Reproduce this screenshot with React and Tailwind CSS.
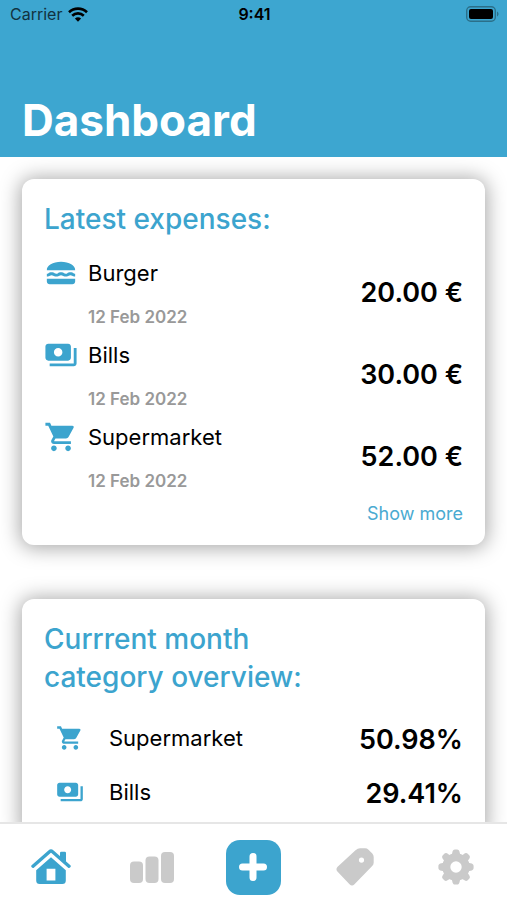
import { MdLunchDining, MdPayments, MdShoppingCart } from "react-icons/md";

const expenses = [
  { name: "Burger", date: "12 Feb 2022", amount: "20.00 €", Icon: MdLunchDining },
  { name: "Bills", date: "12 Feb 2022", amount: "30.00 €", Icon: MdPayments },
  { name: "Supermarket", date: "12 Feb 2022", amount: "52.00 €", Icon: MdShoppingCart },
];

const categories = [
  { name: "Supermarket", share: "50.98%", Icon: MdShoppingCart },
  { name: "Bills", share: "29.41%", Icon: MdPayments },
];

function WifiIcon() {
  return (
    <svg viewBox="0 0 20 15" className="h-[15px] w-5" aria-hidden="true">
      <g fill="none" stroke="#000" strokeWidth="2.6">
        <path d="M1 5.2a13 13 0 0 1 18 0" />
        <path d="M4.2 8.7a8.4 8.4 0 0 1 11.6 0" />
      </g>
      <path d="M10 14.8l-3.1-3.2a4.5 4.5 0 0 1 6.2 0z" fill="#000" />
    </svg>
  );
}

function BatteryIcon() {
  return (
    <svg viewBox="0 0 33 16" className="h-4 w-[33px]" aria-hidden="true">
      <rect x="0.7" y="0.7" width="28.6" height="14.6" rx="4" fill="none" stroke="#2b6f89" strokeWidth="1.4" />
      <rect x="3" y="3" width="24" height="10" rx="2" fill="#000" />
      <path d="M31 5.6c2 .8 2 4 0 4.8z" fill="#2b6f89" />
    </svg>
  );
}

function HomeIcon() {
  return (
    <svg viewBox="0 0 40 36" className="h-9 w-10" aria-hidden="true">
      <path d="M29 4a1.200 1.200 0 0 1 1.200-1.200h3.600A1.200 1.200 0 0 1 35 4V13l-6-5z" fill="currentColor" />
      <path
        d="M2 17.200L18.500 2.700a2.300 2.300 0 0 1 3 0L38 17.200"
        fill="none"
        stroke="currentColor"
        strokeWidth="3.400"
        strokeLinecap="round"
        strokeLinejoin="round"
      />
      <path
        d="M20 8.300L34.800 21.200V31.500a3.500 3.500 0 0 1-3.500 3.500H8.700a3.500 3.500 0 0 1-3.500-3.500V21.200zM15.600 19.800v11.600h8.800V19.800z"
        fill="currentColor"
        fillRule="evenodd"
      />
    </svg>
  );
}

function BarsIcon() {
  return (
    <svg viewBox="0 0 44 31" className="h-[31px] w-11" fill="currentColor" aria-hidden="true">
      <rect x="0" y="9.500" width="13" height="21.500" rx="4" />
      <rect x="15.500" y="4.500" width="13" height="26.500" rx="4" />
      <rect x="31" y="0" width="13" height="31" rx="4" />
    </svg>
  );
}

function PlusIcon() {
  return (
    <svg viewBox="0 0 28 28" className="size-7" aria-hidden="true">
      <path d="M14 3.500v21M3.500 14h21" stroke="#fff" strokeWidth="7" strokeLinecap="round" />
    </svg>
  );
}

function TagIcon() {
  return (
    <svg viewBox="0 0 38 38" className="size-[38px]" fill="currentColor" aria-hidden="true">
      <path
        fillRule="evenodd"
        d="M19.500 2.200Q21.800.3 24 .3h5Q31 .3 32.500 1.700L36.300 5.500Q37.700 7 37.700 9v5.500Q37.700 16.500 36.200 18L18.500 36.200Q16 38.600 13.500 36.200L1.400 23.500Q-.6 21 1.600 18.800ZM25.500 9.500a2.600 2.600 0 1 0 0 5.200 2.600 2.600 0 0 0 0-5.200z"
      />
    </svg>
  );
}

const TEETH = [0, 45, 90, 135, 180, 225, 270, 315];

function GearIcon() {
  return (
    <svg viewBox="0 0 36 36" className="size-9" fill="currentColor" aria-hidden="true">
      <circle cx="18" cy="18" r="9.700" fill="none" stroke="currentColor" strokeWidth="8" />
      {TEETH.map((angle) => (
        <path
          key={angle}
          d="M13 7.500Q14 6 14.300 3.500Q14.700.4 17 .4h2Q21.300.4 21.700 3.500Q22 6 23 7.500z"
          transform={`rotate(${angle} 18 18)`}
        />
      ))}
    </svg>
  );
}

function Card({ title, children }) {
  return (
    <section className="rounded-xl bg-white px-[22px] pt-[21px] pb-[18px] shadow-[0_1px_20px_2px_rgba(0,0,0,0.35)]">
      <h2 className="max-w-[300px] text-[28px] leading-[38px] font-medium text-[#3ca4ce]">{title}</h2>
      {children}
    </section>
  );
}

export default function App() {
  return (
    <div className="flex h-screen flex-col overflow-hidden bg-white font-['Inter','Liberation_Sans',sans-serif] text-black">
      <header className="relative z-10 flex h-[157px] shrink-0 flex-col justify-between bg-[#3da6d0] pb-[11px]">
        <div className="grid grid-cols-3 items-center pt-1 pr-2 pl-[10px] text-base leading-5">
          <div className="flex items-center gap-[6px] text-[#123340]">
            <span>Carrier</span>
            <WifiIcon />
          </div>
          <span className="text-center font-semibold">9:41</span>
          <div className="flex justify-end">
            <BatteryIcon />
          </div>
        </div>
        <h1 className="px-[22px] text-[44px] leading-[52px] font-bold text-white">Dashboard</h1>
      </header>

      <main className="flex min-h-0 flex-1 flex-col gap-[54px] overflow-hidden px-[22px] pt-[22px]">
        <Card title="Latest expenses:">
          <ul className="pt-[18px]">
            {expenses.map(({ name, date, amount, Icon }) => (
              <li key={name} className="flex h-[82px] items-start">
                <Icon className="size-[34px] shrink-0 text-[#3ca4ce]" />
                <div className="flex-1 pl-[10px]">
                  <p className="text-[22px] leading-[34px]">{name}</p>
                  <p className="pt-[15px] text-[17px] leading-6 font-semibold text-[#999]">{date}</p>
                </div>
                <p className="pt-5 text-[27px] leading-[34px] font-semibold">{amount}</p>
              </li>
            ))}
          </ul>
          <div className="flex justify-end pb-px">
            <a href="#expenses" className="text-lg leading-6 text-[#4aaad1]">
              Show more
            </a>
          </div>
        </Card>

        <Card title="Currrent month category overview:">
          <ul className="pt-[15px]">
            {categories.map(({ name, share, Icon }) => (
              <li key={name} className="flex h-[54px] items-center pl-3">
                <Icon className="size-7 shrink-0 text-[#3ca4ce]" />
                <p className="flex-1 pl-[25px] text-[22px] leading-[34px]">{name}</p>
                <p className="pt-1 text-[27px] leading-[34px] font-semibold">{share}</p>
              </li>
            ))}
          </ul>
        </Card>
      </main>

      <nav
        aria-label="Main"
        className="relative z-10 grid h-[78px] shrink-0 grid-cols-5 place-items-center border-t-2 border-[#e6e6e6] bg-white pt-[10px] text-[#cacaca]"
      >
        <button type="button" aria-label="Dashboard" className="text-[#3ca4ce]">
          <HomeIcon />
        </button>
        <button type="button" aria-label="Statistics">
          <BarsIcon />
        </button>
        <button
          type="button"
          aria-label="Add expense"
          className="flex size-[55px] items-center justify-center rounded-[14px] bg-[#3ca4ce]"
        >
          <PlusIcon />
        </button>
        <button type="button" aria-label="Categories">
          <TagIcon />
        </button>
        <button type="button" aria-label="Settings">
          <GearIcon />
        </button>
      </nav>
    </div>
  );
}
